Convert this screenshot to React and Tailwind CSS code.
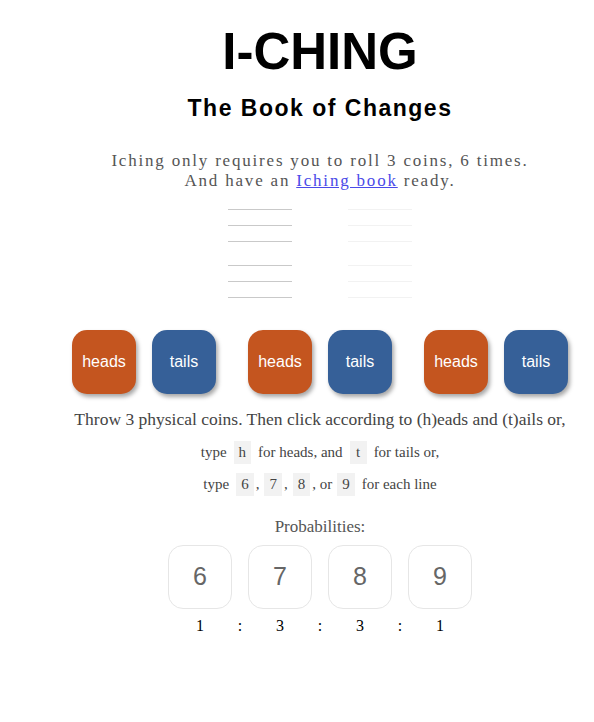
import React from "react";

const serif = { fontFamily: '"Liberation Serif", "DejaVu Serif", serif' };

function Kbd({ children }) {
  return (
    <span className="inline-flex items-center justify-center bg-[#f2f2f2] h-[23px] min-w-[17px] px-[5px] mx-[7px] text-[#444]">
      {children}
    </span>
  );
}

function Coin({ kind }) {
  const heads = kind === "heads";
  return (
    <button
      className={`w-16 h-16 rounded-[15px] flex items-center justify-center text-white text-[16px] shadow-[2px_3px_4px_rgba(0,0,0,0.35)] ${
        heads ? "bg-[#c4551f]" : "bg-[#366098]"
      }`}
      style={{ fontFamily: '"Liberation Sans", Arial, sans-serif' }}
    >
      {kind}
    </button>
  );
}

function LineCol({ color }) {
  return (
    <div className="flex flex-col">
      <div className="flex flex-col gap-[15px]">
        <div className={`w-16 h-px ${color}`} />
        <div className={`w-16 h-px ${color}`} />
        <div className={`w-16 h-px ${color}`} />
      </div>
      <div className="flex flex-col gap-[15px] mt-[23px]">
        <div className={`w-16 h-px ${color}`} />
        <div className={`w-16 h-px ${color}`} />
        <div className={`w-16 h-px ${color}`} />
      </div>
    </div>
  );
}

export default function App() {
  return (
    <div className="w-full min-h-[722px] bg-white pl-[46px]">
      <div className="flex flex-col items-center">
        <h1
          className="mt-[24px] text-[51px] leading-[56px] font-bold text-black"
          style={{ fontFamily: '"Liberation Sans", Arial, sans-serif' }}
        >
          I-CHING
        </h1>
        <h2
          className="mt-[15px] text-[23px] leading-[26px] font-bold text-black tracking-[1.5px]"
          style={{ fontFamily: '"Liberation Sans", Arial, sans-serif' }}
        >
          The Book of Changes
        </h2>
        <div
          className="mt-[30px] text-center text-[17px] leading-[20px] text-[#555] tracking-[1.8px]"
          style={serif}
        >
          <div>Iching only requires you to roll 3 coins, 6 times.</div>
          <div>
            And have an{" "}
            <a href="#" className="text-[#4a4ae8] underline">
              Iching book
            </a>{" "}
            ready.
          </div>
        </div>

        <div className="mt-[18px] flex gap-[56px]">
          <LineCol color="bg-[#c9c9c9]" />
          <LineCol color="bg-[#f2f2f2]" />
        </div>

        <div className="mt-[32px] flex gap-[32px]">
          <div className="flex gap-4">
            <Coin kind="heads" />
            <Coin kind="tails" />
          </div>
          <div className="flex gap-4">
            <Coin kind="heads" />
            <Coin kind="tails" />
          </div>
          <div className="flex gap-4">
            <Coin kind="heads" />
            <Coin kind="tails" />
          </div>
        </div>

        <div className="mt-[14px] text-[17.5px] leading-[22px] text-[#444]" style={serif}>
          Throw 3 physical coins. Then click according to (h)eads and (t)ails or,
        </div>
        <div className="mt-[11px] flex items-center text-[15px] text-[#444]" style={serif}>
          <span>type</span>
          <Kbd>h</Kbd>
          <span>for heads, and</span>
          <Kbd>t</Kbd>
          <span>for tails or,</span>
        </div>
        <div className="mt-[9px] flex items-center text-[15px] text-[#444]" style={serif}>
          <span>type</span>
          <Kbd>6</Kbd>
          <span className="-ml-[5px] mr-[-2px]">,</span>
          <Kbd>7</Kbd>
          <span className="-ml-[5px] mr-[-2px]">,</span>
          <Kbd>8</Kbd>
          <span className="-ml-[5px] mr-[-2px]">, or</span>
          <Kbd>9</Kbd>
          <span>for each line</span>
        </div>

        <div className="mt-[20px] text-[17px] leading-[22px] text-[#555]" style={serif}>
          Probabilities:
        </div>
        <div className="mt-[7px] flex gap-4">
          {["6", "7", "8", "9"].map((n) => (
            <div
              key={n}
              className="w-16 h-16 rounded-[15px] border border-[#e6e6e6] flex items-center justify-center text-[25px] text-[#666]"
              style={{ fontFamily: '"Liberation Sans", Arial, sans-serif' }}
            >
              {n}
            </div>
          ))}
        </div>
        <div className="mt-[6px] grid grid-cols-7 w-[280px] text-[16px] leading-[22px] text-black" style={serif}>
          {["1", ":", "3", ":", "3", ":", "1"].map((c, i) => (
            <div key={i} className="text-center">
              {c}
            </div>
          ))}
        </div>
      </div>
    </div>
  );
}
